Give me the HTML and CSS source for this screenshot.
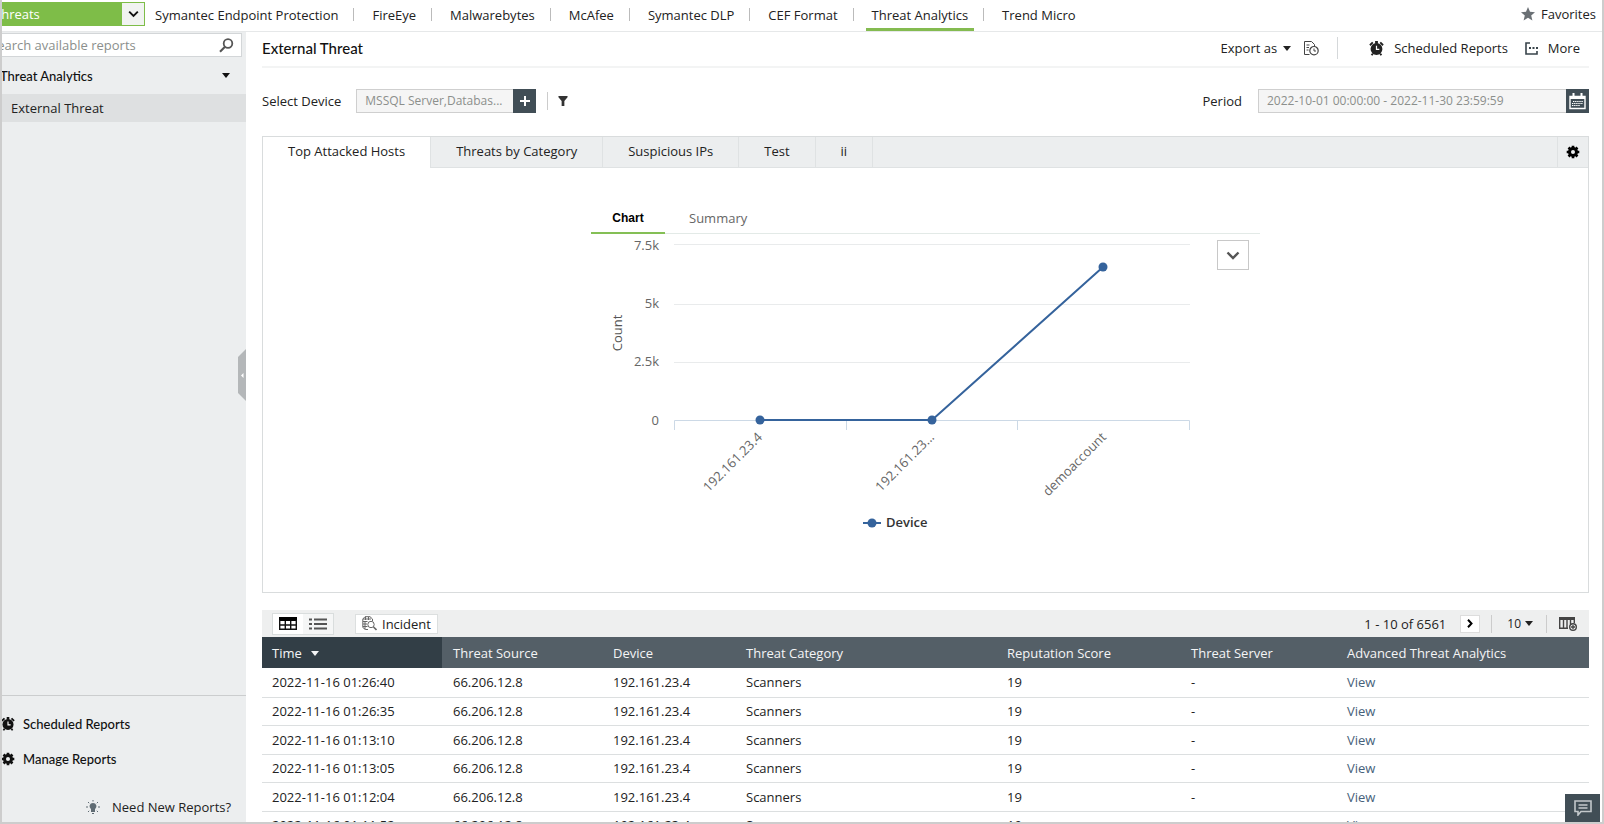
FILE: index.html
```html
<!DOCTYPE html>
<html lang="en">
  <head>
    <meta charset="UTF-8" />
    <meta name="viewport" content="width=device-width, initial-scale=1.0" />
    <title>External Threat</title>
    <link rel="stylesheet" href="styles.css">
  </head>

  <body>

    <!-- shared icons -->
    <svg class="icon-defs" aria-hidden="true">
      <symbol id="icon-alarm" viewBox="0 0 16 16">
        <path d="M1 4.500 4 1.500M15 4.500 12 1.500M4 13.500 2.800 15.300M12 13.500 13.200 15.300" stroke="currentColor" stroke-width="2" />
        <rect x="6.5" y="0" width="3" height="3" fill="currentColor" />
        <circle cx="8" cy="8.5" r="6.3" fill="currentColor" />
        <path d="M8 5v4h3" fill="none" stroke="#fff" stroke-width="1.3" />
      </symbol>
      <symbol id="icon-gear" viewBox="0 0 16 16">
        <circle cx="8" cy="8" r="4" fill="none" stroke="currentColor" stroke-width="3.4" />
        <path d="M8 .8v2.6M8 12.6v2.6M.8 8h2.6M12.6 8h2.6M2.9 2.9l1.9 1.9M11.2 11.2l1.9 1.9M13.1 2.9l-1.9 1.9M4.8 11.2l-1.9 1.9" stroke="currentColor" stroke-width="3" />
      </symbol>
      <symbol id="icon-caret" viewBox="0 0 8 5">
        <path d="M0 0h8L4 5z" fill="currentColor" />
      </symbol>
      <symbol id="icon-chevron" viewBox="0 0 14 9">
        <path d="M1.5 1.5 7 7l5.5-5.5" fill="none" stroke="currentColor" stroke-width="2.4" />
      </symbol>
    </svg>

    <div class="page">

      <header class="topbar">
        <div class="category">
          <select class="category-select" aria-label="Report category">
            <option>Threats</option>
          </select>
          <span class="category-arrow"><svg width="11" height="8"><use href="#icon-chevron" /></svg></span>
        </div>
        <nav class="sources">
          <a href="#">Symantec Endpoint Protection</a>
          <a href="#">FireEye</a>
          <a href="#">Malwarebytes</a>
          <a href="#">McAfee</a>
          <a href="#">Symantec DLP</a>
          <a href="#">CEF Format</a>
          <a href="#" class="active">Threat Analytics</a>
          <a href="#">Trend Micro</a>
        </nav>
        <a href="#" class="favorites">
          <svg width="14" height="14" viewBox="0 0 14 14"><path d="M7 0l2 4.800 5 .400-3.800 3.300L11.400 13.500 7 10.800 2.600 13.500 3.800 8.500 0 5.200l5-.400z" fill="#6a7075" /></svg>
          Favorites
        </a>
      </header>

      <div class="layout">

        <aside class="sidebar">
          <div class="search">
            <input type="text" placeholder="Search available reports" aria-label="Search available reports" />
            <button type="button" aria-label="Search">
              <svg width="15" height="15" viewBox="0 0 15 15"><circle cx="9" cy="5.500" r="4.300" fill="none" stroke="#555" stroke-width="1.800" /><path d="M6 8.800 1 13.800" stroke="#555" stroke-width="2.200" /></svg>
            </button>
          </div>
          <button type="button" class="group">
            Threat Analytics
            <svg width="8" height="5"><use href="#icon-caret" /></svg>
          </button>
          <a href="#" class="report">External Threat</a>

          <div class="sidebar-footer">
            <a href="#" class="footer-link"><svg width="14" height="14"><use href="#icon-alarm" /></svg>Scheduled Reports</a>
            <a href="#" class="footer-link"><svg width="14" height="14"><use href="#icon-gear" /></svg>Manage Reports</a>
            <a href="#" class="need-reports">
              <svg width="14" height="14" viewBox="0 0 14 14">
                <path d="M7 3a3.400 3.400 0 0 1 2 6.200V12H5V9.200A3.400 3.400 0 0 1 7 3z" fill="#5f6b73" />
                <path d="M7 0v1.500M0 7h2M12 7h2M2 2l1.200 1.200M12 2l-1.200 1.200M2 12l1.200-1.200M12 12l-1.200-1.200M6 13.500h2" stroke="#5f6b73" />
              </svg>
              Need New Reports?
            </a>
          </div>

          <button type="button" class="collapse" aria-label="Collapse sidebar">
            <svg width="8" height="52" viewBox="0 0 8 52"><path d="M8 0v52L0 44V8z" fill="#b4b7b9" /><path d="M5.500 24v5L3 26.500z" fill="#fff" /></svg>
          </button>
        </aside>

        <main class="content">

          <div class="title-row">
            <h1>External Threat</h1>
            <div class="actions">
              <button type="button" class="export">Export as <svg width="8" height="5"><use href="#icon-caret" /></svg></button>
              <button type="button" class="export-history" aria-label="Export history">
                <svg width="15" height="15" viewBox="0 0 15 15" fill="none" stroke="#444">
                  <path d="M5.500 13.500h-5v-13h7l3 3v1.500M2.500 4h3M2.500 6.500h2.500M2.500 9h2" />
                  <circle cx="10" cy="9.700" r="4.200" stroke-width="1.200" />
                  <path d="M10 7.500v2.500h2" />
                </svg>
              </button>
              <a href="#" class="scheduled"><svg width="15" height="15"><use href="#icon-alarm" /></svg>Scheduled Reports</a>
              <button type="button" class="more">
                <svg width="13" height="13" viewBox="0 0 13 13"><path d="M5 1H1v11h11V9" fill="none" stroke="#39444b" stroke-width="1.600" /><path d="M4 5h2v2H4zM7.500 5h2v2h-2zM11 5h2v2h-2z" fill="#39444b" /></svg>
                More
              </button>
            </div>
          </div>

          <div class="filters">
            <label for="device">Select Device</label>
            <div class="field device">
              <input id="device" type="text" value="MSSQL Server,Databas..." readonly />
              <button type="button" aria-label="Add device"><svg width="12" height="12" viewBox="0 0 12 12"><path d="M6 1v10M1 6h10" stroke="#fff" stroke-width="2" /></svg></button>
            </div>
            <button type="button" class="filter" aria-label="Filter"><svg width="10" height="10" viewBox="0 0 10 11"><path d="M0 0h10v1.500L6.500 5.500V11h-3V5.500L0 1.500z" fill="#333" /></svg></button>
            <label for="period" class="period-label">Period</label>
            <div class="field period">
              <input id="period" type="text" value="2022-10-01 00:00:00 - 2022-11-30 23:59:59" readonly />
              <button type="button" aria-label="Pick period">
                <svg width="17" height="17" viewBox="0 0 17 17">
                  <path d="M1 3.500h15v12H1z" fill="none" stroke="#fff" stroke-width="1.400" />
                  <path d="M1 3h15v3H1z" fill="#fff" />
                  <path d="M4.500 0v4M12.500 0v4" stroke="#fff" stroke-width="2" />
                  <path d="M4 8.500h10M3 10.500h11M3 12.500h8" stroke="#fff" stroke-dasharray="1.400 .7" stroke-width="1.200" />
                </svg>
              </button>
            </div>
          </div>

          <section class="panel">
            <div class="tabs">
              <button type="button" class="active">Top Attacked Hosts</button>
              <button type="button">Threats by Category</button>
              <button type="button">Suspicious IPs</button>
              <button type="button">Test</button>
              <button type="button">ii</button>
              <button type="button" class="settings" aria-label="Tab settings"><svg width="14" height="14"><use href="#icon-gear" /></svg></button>
            </div>

            <div class="widget">
              <div class="widget-tabs">
                <button type="button" class="active">Chart</button>
                <button type="button">Summary</button>
              </div>
              <div class="chart">
                <svg class="plot" width="600" height="306" viewBox="0 0 600 306" role="img" aria-label="Count by device">
                  <path class="grid" d="M83 10.500h516M83 70.500h516M83 128.500h516" />
                  <path class="axis" d="M83.500 196v-9.500h515V196M255.500 186v10M426.500 186v10" />
                  <g class="label" text-anchor="end">
                    <text x="68" y="16">7.5k</text>
                    <text x="68" y="74">5k</text>
                    <text x="68" y="132">2.5k</text>
                    <text x="68" y="191">0</text>
                    <text transform="translate(172 204) rotate(-45)">192.161.23.4</text>
                    <text transform="translate(344 204) rotate(-45)">192.161.23...</text>
                    <text transform="translate(516 204) rotate(-45)">demoaccount</text>
                  </g>
                  <text class="axis-title" text-anchor="middle" transform="translate(31 99) rotate(-90)">Count</text>
                  <path class="series" d="M169 186h172L512 33" />
                  <g class="points">
                    <circle cx="169" cy="186" r="4.500" />
                    <circle cx="341" cy="186" r="4.500" />
                    <circle cx="512" cy="33" r="4.500" />
                    <circle cx="281" cy="289" r="4.500" />
                  </g>
                  <path class="series" d="M272 289h18" />
                  <text class="legend" x="295" y="293">Device</text>
                </svg>
                <button type="button" class="chart-type" aria-label="Chart type"><svg width="14" height="9"><use href="#icon-chevron" /></svg></button>
              </div>
            </div>
          </section>

          <section class="results">
            <div class="toolbar">
              <div class="view-switch">
                <button type="button" class="active" aria-label="Table view">
                  <svg width="18" height="13" viewBox="0 0 18 13"><path d="M0 0h18v4H0z" /><path d="M.700 3v9.300h16.600V3M1 8h16M6.300 4v8M11.700 4v8" fill="none" stroke="#111" stroke-width="1.400" /></svg>
                </button>
                <button type="button" aria-label="List view">
                  <svg width="18" height="12" viewBox="0 0 18 12"><path d="M0 1.500h3M0 6h3M0 10.500h3M5 1.500h13M5 6h13M5 10.500h13" stroke="#555" stroke-width="1.800" /></svg>
                </button>
              </div>
              <button type="button" class="incident">
                <svg width="15" height="15" viewBox="0 0 15 15" fill="none" stroke="#666">
                  <path d="M6 13.500H3.500L.800 11.500V3L3 .700h5L10.500 3v2M1 3h8M3.500 1v3M1 5.500h4.500M1 8h4M1 10.500h4.500M3 5.500v8M6.500 1v3" />
                  <circle cx="9" cy="8.500" r="3.200" />
                  <path d="M11.500 11l3 3" stroke-width="1.600" />
                </svg>
                Incident
              </button>
              <span class="range">1 - 10 of 6561</span>
              <button type="button" class="next" aria-label="Next page"><svg width="6" height="9" viewBox="0 0 6 9"><path d="M1 .800 4.500 4.500 1 8.200" fill="none" stroke="#000" stroke-width="2" /></svg></button>
              <button type="button" class="page-size">10<svg width="8" height="5"><use href="#icon-caret" /></svg></button>
              <button type="button" class="columns" aria-label="Choose columns">
                <svg width="18" height="14" viewBox="0 0 18 14">
                  <path d="M.700 11V1.500h14.600V6M4.500 3v8M8 3v8M11.500 3v4M0 11.300h9" fill="none" stroke="#444" stroke-width="1.400" />
                  <path d="M0 0h16v3H0z" fill="#444" />
                  <circle cx="14" cy="10" r="3.300" fill="#eeefef" stroke="#444" stroke-width="1.400" />
                  <path d="M14 8v4M12 10h4" stroke="#444" stroke-width="1.300" />
                </svg>
              </button>
            </div>

            <table>
              <colgroup>
                <col class="col-time"><col class="col-source"><col class="col-device"><col class="col-category"><col class="col-score"><col class="col-server"><col>
              </colgroup>
              <thead>
                <tr>
                  <th class="sorted">Time <svg width="8" height="5"><use href="#icon-caret" /></svg></th>
                  <th>Threat Source</th>
                  <th>Device</th>
                  <th>Threat Category</th>
                  <th>Reputation Score</th>
                  <th>Threat Server</th>
                  <th>Advanced Threat Analytics</th>
                </tr>
              </thead>
              <tbody>
                <tr><td>2022-11-16 01:26:40</td><td>66.206.12.8</td><td>192.161.23.4</td><td>Scanners</td><td>19</td><td>-</td><td><a href="#">View</a></td></tr>
                <tr><td>2022-11-16 01:26:35</td><td>66.206.12.8</td><td>192.161.23.4</td><td>Scanners</td><td>19</td><td>-</td><td><a href="#">View</a></td></tr>
                <tr><td>2022-11-16 01:13:10</td><td>66.206.12.8</td><td>192.161.23.4</td><td>Scanners</td><td>19</td><td>-</td><td><a href="#">View</a></td></tr>
                <tr><td>2022-11-16 01:13:05</td><td>66.206.12.8</td><td>192.161.23.4</td><td>Scanners</td><td>19</td><td>-</td><td><a href="#">View</a></td></tr>
                <tr><td>2022-11-16 01:12:04</td><td>66.206.12.8</td><td>192.161.23.4</td><td>Scanners</td><td>19</td><td>-</td><td><a href="#">View</a></td></tr>
                <tr><td>2022-11-16 01:11:52</td><td>66.206.12.8</td><td>192.161.23.4</td><td>Scanners</td><td>19</td><td>-</td><td><a href="#">View</a></td></tr>
              </tbody>
            </table>
          </section>

        </main>
      </div>
    </div>

    <button type="button" class="chat" aria-label="Chat">
      <svg width="18" height="16" viewBox="0 0 18 16" fill="none" stroke="#c3c8cb"><path d="M1 1h16v10.500H7L4 15v-3.500H1z" stroke-width="1.600" /><path d="M4.500 5h9M4.500 8h9" stroke-width="1.400" /></svg>
    </button>

  </body>
</html>
```
FILE: styles.css
```css
* {
  box-sizing: border-box;
}

body {
  margin: 0;
  height: 100vh;
  overflow: hidden;
  position: relative;
  border: 2px solid #cdcdcd;
  border-top: none;
  background: #fff;
  color: #222;
  font-family: "Open Sans", "Noto Sans", sans-serif;
  font-size: 13px;
  line-height: 18px;
}

a {
  color: inherit;
  text-decoration: none;
}

button, input, select {
  margin: 0;
  padding: 0;
  border: none;
  background: none;
  color: inherit;
  font: inherit;
}

button {
  cursor: pointer;
}

svg {
  flex: none;
}

.icon-defs {
  position: absolute;
  width: 0;
  height: 0;
}

/* the page is scrolled a little to the right */
.page {
  height: 100%;
  margin-left: -14px;
  display: flex;
  flex-direction: column;
}

/* top bar */
.topbar {
  height: 32px;
  flex: none;
  display: flex;
  align-items: flex-start;
  border-bottom: 1px solid #e6e8e9;
}

.category {
  position: relative;
  width: 157px;
  height: 24px;
  margin-top: 2px;
}

.category-select {
  appearance: none;
  width: 100%;
  height: 100%;
  padding-left: 6px;
  background: #7ebd48;
  color: #fff;
}

.category-arrow {
  position: absolute;
  top: 0;
  right: 0;
  width: 24px;
  height: 24px;
  display: flex;
  align-items: center;
  justify-content: center;
  background: #f1f3f1;
  border: 1px solid #7ebd48;
  color: #111;
  pointer-events: none;
}

.sources {
  display: flex;
  margin-left: 4px;
}

.sources a {
  position: relative;
  height: 31px;
  padding: 6px 6px 0;
  margin-right: 22px;
  border-bottom: 3px solid transparent;
}

.sources a::after {
  content: "";
  position: absolute;
  right: -10px;
  top: 8px;
  height: 13px;
  border-left: 1px solid #bbb;
}

.sources a:last-child::after {
  display: none;
}

.sources .active {
  border-bottom-color: #84bb50;
}

.favorites {
  display: flex;
  align-items: center;
  gap: 6px;
  margin: 5px 6px 0 auto;
}

/* sidebar */
.layout {
  flex: 1;
  min-height: 0;
  display: flex;
}

.sidebar {
  position: relative;
  width: 258px;
  flex: none;
  display: flex;
  flex-direction: column;
  background: #eceeef;
}

.search {
  display: flex;
  height: 24px;
  margin: 1px 4px 0 0;
  background: #fff;
  border: 1px solid #d3d6d8;
}

.search input {
  flex: 1;
  min-width: 0;
  padding-left: 1px;
}

.search input::placeholder {
  color: #8b8f8c;
  opacity: 1;
}

.search button {
  width: 30px;
  display: flex;
  align-items: center;
  justify-content: center;
}

.group {
  display: flex;
  align-items: center;
  justify-content: space-between;
  height: 37px;
  padding: 0 16px 0 12px;
  color: #111;
  font-family: Lato, sans-serif;
  font-size: 13px;
  font-weight: 500;
}

.report {
  padding: 5px 0 5px 23px;
  background: #dee0e1;
}

.sidebar-footer {
  height: 127px;
  margin-top: auto;
  display: flex;
  flex-direction: column;
  border-top: 1px solid #cbcdce;
  padding-top: 10px;
}

.footer-link {
  display: flex;
  align-items: center;
  gap: 8px;
  height: 35px;
  padding-left: 13px;
  color: #111;
  font-family: Lato, sans-serif;
  font-weight: 500;
}

.need-reports {
  display: flex;
  align-items: center;
  gap: 12px;
  margin: 22px 0 0 98px;
}

.collapse {
  position: absolute;
  right: 0;
  top: 317px;
  height: 52px;
  display: flex;
}

/* title and filters */
.content {
  flex: 1;
  min-width: 0;
  padding: 0 13px 0 16px;
}

.title-row {
  display: flex;
  align-items: center;
  justify-content: space-between;
  height: 36px;
  padding-bottom: 2px;
  border-bottom: 2px solid #f3f4f4;
}

h1 {
  margin: 0;
  color: #111;
  font-family: Lato, sans-serif;
  font-size: 15px;
  font-weight: 500;
}

.actions {
  display: flex;
  align-items: center;
  padding-right: 9px;
}

.actions button, .actions a {
  display: flex;
  align-items: center;
}

.export {
  gap: 6px;
}

.export-history {
  height: 22px;
  margin-left: 13px;
  padding-right: 18px;
  border-right: 1px solid #d5d8da;
}

.scheduled {
  gap: 10px;
  margin-left: 31px;
}

.more {
  gap: 10px;
  margin-left: 17px;
}

.filters {
  display: flex;
  align-items: center;
  height: 24px;
  margin-top: 21px;
}

.field {
  display: flex;
  height: 24px;
}

.field input {
  flex: 1;
  min-width: 0;
  padding: 0 8px;
  background: #f5f5f5;
  border: 1px solid #cfcfcf;
  border-right: none;
  color: #8c8f8c;
  font-size: 12px;
}

.field button {
  width: 23px;
  display: flex;
  align-items: center;
  justify-content: center;
  background: #414e56;
}

.device {
  width: 180px;
  margin-left: 15px;
}

.filter {
  display: flex;
  align-items: center;
  height: 18px;
  margin-left: 11px;
  padding-left: 10px;
  border-left: 1px solid #ccc;
}

.period-label {
  margin-left: auto;
}

.period {
  width: 331px;
  margin-left: 16px;
}

/* chart panel */
.panel {
  margin-top: 23px;
  height: 457px;
  border: 1px solid #d9dcdd;
}

.tabs {
  display: flex;
  height: 31px;
  background: #eceeef;
  border-bottom: 1px solid #dfe2e3;
}

.tabs button {
  padding: 0 25px 3px;
  border-right: 1px solid #dfe2e3;
}

.tabs .active {
  height: 31px;
  padding-bottom: 4px;
  background: #fff;
}

.tabs .settings {
  display: flex;
  align-items: center;
  margin-left: auto;
  padding: 0 8px;
  border-right: none;
  border-left: 1px solid #dfe2e3;
  color: #000;
}

.widget {
  width: 669px;
  max-width: 100%;
  margin: 34px auto 0;
}

.widget-tabs {
  display: flex;
  height: 32px;
  border-bottom: 1px solid #e3eae7;
}

.widget-tabs button {
  padding: 0 24px;
  color: #666;
}

.widget-tabs .active {
  width: 74px;
  height: 32px;
  padding: 2px 0 0;
  border-bottom: 2px solid #84bf55;
  color: #000;
  font-family: "Liberation Sans", Arial, sans-serif;
  font-size: 12px;
  font-weight: bold;
}

.chart {
  display: flex;
  justify-content: space-between;
  align-items: flex-start;
}

.chart-type {
  display: flex;
  align-items: center;
  justify-content: center;
  width: 32px;
  height: 30px;
  margin: 6px 11px 0 0;
  border: 1px solid #c8c8c8;
  color: #555;
}

.plot .grid {
  stroke: #e9ebec;
}

.plot .axis {
  fill: none;
  stroke: #ccd9e6;
}

.plot .series {
  fill: none;
  stroke: #35639c;
  stroke-width: 2;
}

.plot .points {
  fill: #35639c;
}

.plot .label {
  fill: #666;
}

.plot .axis-title {
  fill: #555;
}

.plot .legend {
  fill: #333;
  font-weight: 600;
}

/* results */
.results {
  margin-top: 17px;
}

.toolbar {
  display: flex;
  align-items: center;
  height: 27px;
  padding: 0 12px 0 10px;
  background: #eeefef;
}

.toolbar button {
  display: flex;
  align-items: center;
  justify-content: center;
}

.view-switch {
  display: flex;
  height: 22px;
  border: 1px solid #d9dddd;
}

.view-switch button {
  width: 30px;
  background: #f5f6f6;
}

.view-switch .active {
  background: #fff;
}

.incident {
  gap: 5px;
  height: 20px;
  margin-left: 21px;
  padding: 0 6px;
  background: #fff;
  border: 1px solid #dcdfdf;
}

.range {
  margin-left: auto;
}

.next {
  width: 20px;
  height: 18px;
  margin-left: 14px;
  background: #fff;
  border: 1px solid #ddd;
}

.page-size {
  gap: 4px;
  height: 18px;
  margin-left: 11px;
  padding: 0 13px 0 15px;
  border-left: 1px solid #ccc;
  border-right: 1px solid #ccc;
  font-size: 12px;
}

.columns {
  margin-left: 12px;
}

table {
  width: 100%;
  table-layout: fixed;
  border-collapse: collapse;
}

.col-time {
  width: 180px;
}

.col-source {
  width: 160px;
}

.col-device {
  width: 133px;
}

.col-category {
  width: 261px;
}

.col-score {
  width: 184px;
}

.col-server {
  width: 156px;
}

th, td {
  padding: 0 0 0 11px;
  text-align: left;
  font-weight: normal;
}

th:first-child, td:first-child {
  padding-left: 10px;
}

th {
  height: 31px;
  background: #545f67;
  color: #f4f5f6;
}

th.sorted {
  background: #323e46;
}

th svg {
  margin: 0 0 2px 6px;
}

td {
  height: 29px;
  border-bottom: 1px solid #dcdfe0;
}

tr:nth-child(even) td {
  height: 28px;
}

td a {
  color: #46617a;
}

.chat {
  position: absolute;
  right: 2px;
  bottom: 0;
  width: 35px;
  height: 28px;
  display: flex;
  align-items: center;
  justify-content: center;
  background: #414e56;
}
```
